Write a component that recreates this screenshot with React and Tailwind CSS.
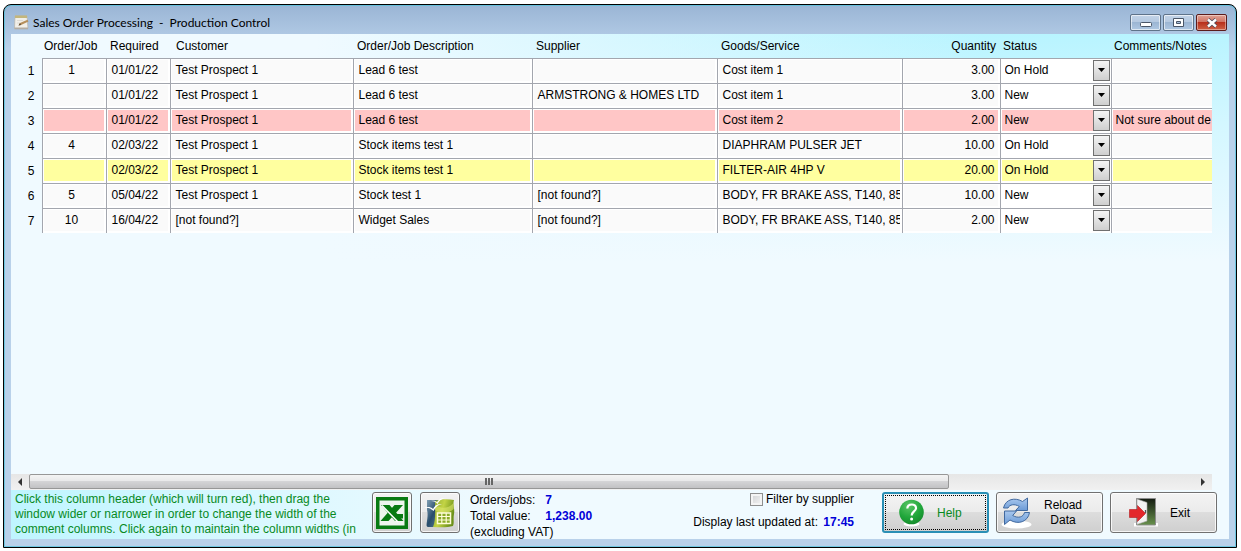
import { useState } from "react";

const jobs = [
  { job: "1", required: "01/01/22", customer: "Test Prospect 1", description: "Lead 6 test", supplier: "", goods: "Cost item 1", quantity: "3.00", status: "On Hold", notes: "" },
  { job: "", required: "01/01/22", customer: "Test Prospect 1", description: "Lead 6 test", supplier: "ARMSTRONG & HOMES LTD", goods: "Cost item 1", quantity: "3.00", status: "New", notes: "" },
  { job: "", required: "01/01/22", customer: "Test Prospect 1", description: "Lead 6 test", supplier: "", goods: "Cost item 2", quantity: "2.00", status: "New", notes: "Not sure about de", tone: "red" },
  { job: "4", required: "02/03/22", customer: "Test Prospect 1", description: "Stock items test 1", supplier: "", goods: "DIAPHRAM PULSER JET", quantity: "10.00", status: "On Hold", notes: "" },
  { job: "", required: "02/03/22", customer: "Test Prospect 1", description: "Stock items test 1", supplier: "", goods: "FILTER-AIR 4HP V", quantity: "20.00", status: "On Hold", notes: "", tone: "yellow" },
  { job: "5", required: "05/04/22", customer: "Test Prospect 1", description: "Stock test 1", supplier: "[not found?]", goods: "BODY, FR BRAKE ASS, T140, 85", quantity: "10.00", status: "New", notes: "" },
  { job: "10", required: "16/04/22", customer: "[not found?]", description: "Widget Sales", supplier: "[not found?]", goods: "BODY, FR BRAKE ASS, T140, 85", quantity: "2.00", status: "New", notes: "" },
];

const tones = { red: "bg-[#ffc6c6]", yellow: "bg-[#ffff9f]" };

const columns = [
  { title: "Order/Job", width: "w-16", align: "text-left pl-0.5" },
  { title: "Required", width: "w-16", align: "text-left pl-1" },
  { title: "Customer", width: "w-[183px]", align: "text-left pl-1.5" },
  { title: "Order/Job Description", width: "w-[179px]", align: "text-left pl-1" },
  { title: "Supplier", width: "w-[185px]", align: "text-left pl-1" },
  { title: "Goods/Service", width: "w-[185px]", align: "text-left pl-1" },
  { title: "Quantity", width: "w-[98px]", align: "text-right pr-1" },
  { title: "Status", width: "w-[111px]", align: "text-left pl-[3px]" },
  { title: "Comments/Notes", width: "", align: "text-left pl-[3px]" },
];

function Cell({ tone, plain = "bg-[#fafafa]", align = "pl-1", edge = "border-r-2", children }) {
  return (
    <td className="h-[25px] border-t border-l border-[#a3a6ae] p-0">
      <div className={`h-6 border border-b-2 border-white leading-[21px] whitespace-nowrap overflow-hidden ${edge} ${align} ${tone ? tones[tone] : plain}`}>
        {children}
      </div>
    </td>
  );
}

function StatusSelect({ row, index, tone }) {
  return (
    <div className="relative flex h-full">
      <select
        aria-label={`Status of row ${index + 1}`}
        defaultValue={row.status}
        className={`h-[21px] w-full appearance-none pl-[3px] pr-5 outline-none ${tone ? tones[tone] : "bg-white"}`}
      >
        <option>New</option>
        <option>On Hold</option>
      </select>
      <span className="pointer-events-none absolute top-0 right-0 flex h-[21px] w-[17px] items-center justify-center border border-[#707070] bg-linear-to-b from-[#f4f4f4] to-[#cfcfcf]">
        <svg width="7" height="4" viewBox="0 0 7 4" aria-hidden="true"><path d="M0 0h7L3.500 4z" fill="#000" /></svg>
      </span>
    </div>
  );
}

function TitleIcon() {
  return (
    <svg width="15" height="15" viewBox="0 0 15 15" aria-hidden="true">
      <path d="M1 1h12l1 12.500H.5z" fill="#f1efe9" stroke="#b9b3a9" strokeWidth=".7" />
      <path d="M1 .5h12v2.500H1z" fill="#c3b67c" />
      <path d="M.5 12.500h13.500v1.800H.5z" fill="#b3aca2" />
      <path d="M3 5.500h6M3 8h3" stroke="#dedbd4" />
      <path d="m4.500 10.500 1.500-2.500 7.500-3.200 1 1.700-7.500 3.600z" fill="#b58f5c" />
      <path d="m4.500 10.500 1.500-2.500 1 2.100z" fill="#5c4a36" />
    </svg>
  );
}

function ExcelIcon() {
  return (
    <svg width="32" height="32" viewBox="0 0 32 32" aria-hidden="true">
      <path d="M0 0h32v32H0z" fill="#087a12" />
      <path d="M3.500 3.500h25v25h-25z" fill="#eef5ee" />
      <path d="M18.500 8H27L12.500 24H4.500z" fill="#087a12" />
      <path d="M5 8h8.500L27.500 24H19z" fill="#087a12" />
      <path d="M6 8.500 22 25" stroke="#fff" strokeWidth="1.500" />
      <path d="M19 17h8v4.500h-4.500z" fill="#087a12" />
    </svg>
  );
}

function CalcIcon() {
  return (
    <svg width="32" height="32" viewBox="0 0 32 32" className="shrink-0" aria-hidden="true">
      <defs>
        <linearGradient id="calc-blue" x1="0" x2="1" y1="0" y2="1"><stop stopColor="#86a3b6" /><stop offset=".5" stopColor="#284d6c" /><stop offset="1" stopColor="#5c8095" /></linearGradient>
        <linearGradient id="calc-green" x1="0" x2="1" y1="0" y2=".4"><stop stopColor="#8ca832" /><stop offset=".5" stopColor="#c3d445" /><stop offset="1" stopColor="#6d9119" /></linearGradient>
      </defs>
      <path d="M3 3h13v27H4c-2 0-1.500-3-1-6s1-8 0-11z" fill="url(#calc-blue)" />
      <path d="M11 4c6-2 13-2 19-1-1.500 5 1 9 0 14s.5 9-1 12c-5 1.500-12 1.500-20 1 3-7 2-17 2-26z" fill="url(#calc-green)" />
      <path d="M11 8c6 4 13 4 18.500-2l.2 6c-6 5-13 5-18.700 1z" fill="#dce66c" opacity=".6" />
      <path d="M13.500 16h13v10.500h-13z" fill="#8aaa26" stroke="#fffdd9" strokeWidth="1.500" />
      <path d="M17.800 16v10.500M22.200 16v10.500M13.500 19.500h13M13.500 23h13" stroke="#fffdd9" strokeWidth="1.200" />
      <path d="M0 10.500c4-1 7-.5 9 1.500 1.500-3.500 5-5.500 9-5-4 1-6.500 3-8.500 7C7 11.500 4 10.500 0 10.500zM7 4c3-.8 5 0 6 1.200C14.500 2.500 17 1 21 1c-4 1-6 3-7.500 6C12 5 10 4 7 4z" fill="#fff" />
    </svg>
  );
}

function HelpIcon() {
  return (
    <svg width="27" height="28" viewBox="0 0 27 28" aria-hidden="true">
      <defs><radialGradient id="help-green" cx=".4" cy=".25" r=".8"><stop stopColor="#5bc566" /><stop offset=".6" stopColor="#20a63a" /><stop offset="1" stopColor="#158a2c" /></radialGradient></defs>
      <ellipse cx="13.500" cy="25" rx="8" ry="2.500" fill="#fff" />
      <circle cx="13.500" cy="13" r="12.300" fill="url(#help-green)" />
      <path d="M9.300 9.500c.3-5.300 9-5.300 8.700-.3-.2 3.300-4.300 3.300-4.300 7.300" fill="none" stroke="#fff" strokeWidth="2.200" />
      <circle cx="13.600" cy="20" r="1.500" fill="#fff" />
    </svg>
  );
}

function ReloadIcon() {
  return (
    <svg width="31" height="32" viewBox="0 0 31 32" aria-hidden="true">
      <defs><linearGradient id="reload-blue" x1="0" x2="0" y1="0" y2="1"><stop stopColor="#a9c8ee" /><stop offset="1" stopColor="#6b9ad6" /></linearGradient></defs>
      <ellipse cx="15.500" cy="27.500" rx="15" ry="4" fill="#fff" />
      <path d="M2.500 11C4.500 2 14 0 21.500 4.500L26.500 1v12.500H14.500l3.800-4C13.500 6.500 8.500 7.500 7 11z" fill="url(#reload-blue)" stroke="#41699f" strokeWidth="1" />
      <path d="M28.500 15.500C27 25 17 28 9 23L3.500 27.500V14H15.500l-3.800 4.500c5.300 3.200 10.800 1.700 11.800-3z" fill="url(#reload-blue)" stroke="#41699f" strokeWidth="1" />
    </svg>
  );
}

function ExitIcon() {
  return (
    <svg width="29" height="29" viewBox="0 0 29 29" aria-hidden="true">
      <defs><linearGradient id="exit-dark" x1="0" x2="0" y1="0" y2="1"><stop stopColor="#141c12" /><stop offset="1" stopColor="#68914c" /></linearGradient></defs>
      <path d="M5 25h24v3.500H5z" fill="#fff" />
      <path d="M7.500.5h19V27h-19z" fill="url(#exit-dark)" stroke="#8b8b8b" />
      <path d="M8 1 18 4.500V23L8 26.500z" fill="#f2f2f2" stroke="#a5a5a5" strokeWidth=".6" />
      <path d="M16.500 12v3" stroke="#555" strokeWidth="1.300" />
      <path d="M.5 11.500h8V7.500l8 8-8 8v-4h-8z" fill="#e3272b" stroke="#b3181c" strokeWidth=".6" />
    </svg>
  );
}

const pushButton = "flex h-[41px] items-center rounded-[3px] border border-[#707070] bg-[linear-gradient(#f3f3f3,#ebebeb_50%,#dddddd_50%,#cfcfcf)] text-[12px] inset-ring inset-ring-white/80";
const captionButton = "flex h-[17px] w-[31px] items-center justify-center rounded-xs border border-[#5f7389] bg-[linear-gradient(#c3d4e8,#b4c8e0_50%,#9cb6d3_50%,#afc8e3)] inset-ring inset-ring-white/60";

export default function App() {
  const [bySupplier, setBySupplier] = useState(false);
  return (
    <div className="flex min-h-screen bg-white pt-1 pr-1 pb-[3px] pl-[3px] font-['Liberation_Sans',Arial,sans-serif] text-[12px] text-black">
      <main className="flex min-w-0 flex-1 flex-col rounded-t-lg border border-black bg-linear-to-b from-[#9ab5d5] via-[#b9d1ea] via-8% to-[#b9d1ea] px-[7px] pb-[8px] inset-ring inset-ring-[#4fc3dd]/70">
        <header className="flex h-[29px] items-center gap-1 pt-1.5 pr-0.5 pl-[3px]">
          <TitleIcon />
          <h1 className="font-[Lato,sans-serif] text-[12px] whitespace-pre">{"Sales Order Processing  -  Production Control"}</h1>
          <div className="ml-auto flex gap-0.5">
            <button type="button" aria-label="Minimise" className={captionButton}>
              <svg width="12" height="5" viewBox="0 0 12 5" className="mt-1"><rect x=".5" y=".5" width="11" height="4" rx="1" fill="#fff" stroke="#4a5668" /></svg>
            </button>
            <button type="button" aria-label="Maximise" className={captionButton}>
              <svg width="11" height="9" viewBox="0 0 11 9"><path d="M.5.5h10v8H.5z" fill="#fff" stroke="#4a5668" /><path d="M3.500 3.500h4v2h-4z" fill="#a9c0dc" stroke="#4a5668" /></svg>
            </button>
            <button type="button" aria-label="Close" className="flex h-[17px] w-[31px] items-center justify-center rounded-xs border border-[#5c1c1c] bg-[linear-gradient(#e0a296,#cf6f5f_50%,#b8301c_50%,#cf6145)] inset-ring inset-ring-white/40">
              <svg width="12" height="10" viewBox="0 0 12 10"><path d="m2 1.500 8 7m0-7-8 7" stroke="#4a4a5a" strokeWidth="4" /><path d="m2 1.500 8 7m0-7-8 7" stroke="#fff" strokeWidth="2.400" /></svg>
            </button>
          </div>
        </header>

        <div className="flex min-w-0 flex-1 flex-col bg-[#f0faff] bg-[linear-gradient(to_left,#f0faff00_20%,#f0faff_75%),linear-gradient(to_bottom,#b8f4ff,#d4f7ff_18%,#f0faff_45%)]">
          <section className="flex-1 overflow-hidden pr-[17px]">
            <table className="w-full table-fixed border-collapse">
              <colgroup>
                <col className="w-[31px]" />
                {columns.map((c) => <col key={c.title} className={c.width} />)}
              </colgroup>
              <thead>
                <tr className="h-6 whitespace-nowrap">
                  <th aria-label="Row" />
                  {columns.map((c) => (
                    <th key={c.title} className={`p-0 font-normal ${c.align}`}>{c.title}</th>
                  ))}
                </tr>
              </thead>
              <tbody>
                {jobs.map((row, i) => (
                  <tr key={i}>
                    <th className="bg-[#f0faff] p-0 pr-[7px] text-right font-normal">{i + 1}</th>
                    <Cell tone={row.tone} align="pr-1 text-center">{row.job}</Cell>
                    <Cell tone={row.tone}>{row.required}</Cell>
                    <Cell tone={row.tone}>{row.customer}</Cell>
                    <Cell tone={row.tone}>{row.description}</Cell>
                    <Cell tone={row.tone}>{row.supplier}</Cell>
                    <Cell tone={row.tone}>{row.goods}</Cell>
                    <Cell tone={row.tone} align="pr-[3px] text-right">{row.quantity}</Cell>
                    <Cell tone={row.tone} plain="bg-white" align="" edge="border-r"><StatusSelect row={row} index={i} tone={row.tone} /></Cell>
                    <Cell tone={row.tone} align="pl-[3px]" edge="border-r-0">{row.notes}</Cell>
                  </tr>
                ))}
              </tbody>
            </table>
          </section>

          <div className="mr-[17px] flex h-4 items-center bg-linear-to-b from-[#e6e6e6] to-[#f1f1f1]">
            <button type="button" aria-label="Scroll left" className="flex h-full w-[18px] items-center justify-center">
              <svg width="4" height="8" viewBox="0 0 4 8"><path d="M4 0v8L0 4z" fill="#333" /></svg>
            </button>
            <div className="flex h-full flex-1">
              <div className="flex h-[15px] w-[79%] items-center justify-center gap-px rounded-xs border border-[#979797] bg-[linear-gradient(#f4f4f4,#e8e8e9_50%,#d4d4d6_50%,#c2c2c4)]">
                <span className="h-[7px] w-0.5 bg-[#666]" />
                <span className="h-[7px] w-0.5 bg-[#666]" />
                <span className="h-[7px] w-0.5 bg-[#666]" />
              </div>
            </div>
            <button type="button" aria-label="Scroll right" className="flex h-full w-[18px] items-center justify-center">
              <svg width="4" height="8" viewBox="0 0 4 8"><path d="M0 0v8l4-4z" fill="#333" /></svg>
            </button>
          </div>

          <footer className="flex h-[49px] items-start bg-[linear-gradient(to_right,#bff5ff,#d9f8ff_20%,#f0faff_40%)] pt-0.5 pr-3 pl-1">
            <p className="w-[357px] leading-[15px] text-[#088a1e]">
              Click this column header (which will turn red), then drag the<br />
              window wider or narrower in order to change the width of the<br />
              comment columns. Click again to maintain the column widths (in
            </p>
            <div className="flex gap-2">
              <button type="button" aria-label="Export to Excel" className={`w-10 justify-center ${pushButton}`}><ExcelIcon /></button>
              <button type="button" aria-label="Export to Calc" className={`w-10 justify-center ${pushButton}`}><CalcIcon /></button>
            </div>
            <dl className="ml-2.5 grid grid-cols-[auto_auto] gap-x-2.5 leading-4">
              <dt>Orders/jobs:</dt><dd className="font-bold text-[#0000d8]">7</dd>
              <dt>Total value:</dt><dd className="font-bold text-[#0000d8]">1,238.00</dd>
              <dt className="col-span-2">(excluding VAT)</dt>
            </dl>
            <div className="ml-auto flex flex-col items-end gap-2 pr-7 leading-[15px]">
              <label className="flex items-center gap-[3px]">
                <input
                  type="checkbox"
                  checked={bySupplier}
                  onChange={(e) => setBySupplier(e.target.checked)}
                  className="size-[13px] appearance-none border border-[#8e8f8f] bg-linear-to-br from-[#cfd0d2] to-[#f6f6f6] inset-ring-2 inset-ring-[#f4f4f4] checked:bg-[#3b6ea5]"
                />
                Filter by supplier
              </label>
              <p>Display last updated at: <b className="ml-0.5 text-[#0000d8]">17:45</b></p>
            </div>
            <div className="flex gap-[7px]">
              <button type="button" className="flex h-[41px] w-[107px] items-center rounded-[3px] border-2 border-[#2a8fb5] bg-[linear-gradient(#f3f3f3,#ebebeb_50%,#dddddd_50%,#cfcfcf)] p-px text-[12px] text-[#088a1e]">
                <span className="flex h-full w-full items-center border border-dotted border-black pl-3">
                  <HelpIcon />
                  <span className="ml-3">Help</span>
                </span>
              </button>
              <button type="button" className={`w-[107px] gap-2 pl-1 ${pushButton}`}>
                <ReloadIcon />
                <span className="flex-1 pr-4 text-center leading-[15px]">Reload<br />Data</span>
              </button>
              <button type="button" className={`w-[107px] gap-3 pl-[18px] ${pushButton}`}>
                <ExitIcon />
                Exit
              </button>
            </div>
          </footer>
        </div>
      </main>
    </div>
  );
}
